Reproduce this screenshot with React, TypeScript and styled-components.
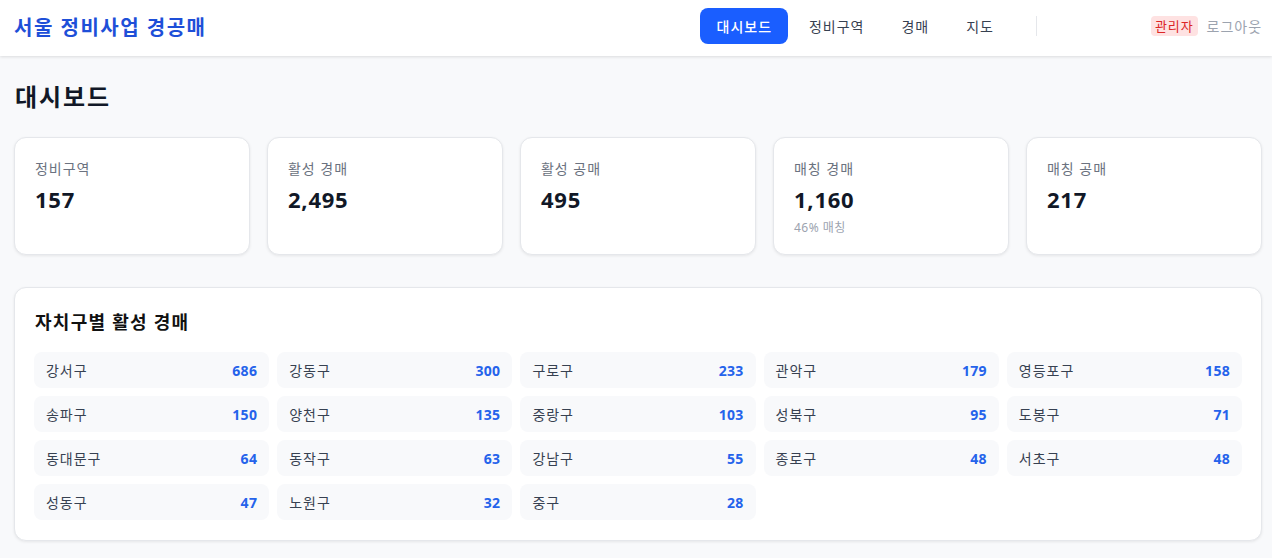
import React from "react";
import styled, { createGlobalStyle } from "styled-components";

const GlobalStyle = createGlobalStyle`
  * { box-sizing: border-box; }
  html, body { margin: 0; padding: 0; }
  body {
    background: #f8f9fb;
    font-family: "Noto Sans", "Noto Sans CJK KR", sans-serif;
    color: #111827;
  }
`;

const Header = styled.header`
  height: 56px;
  background: #ffffff;
  display: flex;
  align-items: center;
  padding: 0 10px 4px 14px;
  box-shadow: 0 1px 3px rgba(0, 0, 0, 0.12);
  position: relative;
  z-index: 1;
`;

const Logo = styled.div`
  font-size: 20px;
  font-weight: 700;
  color: #1e4fd8;
  letter-spacing: 0.075em;
`;

const Nav = styled.nav`
  margin-left: auto;
  display: flex;
  align-items: center;
  gap: 4px;
`;

const NavItem = styled.a<{ $active?: boolean }>`
  height: 36px;
  padding: 0 16px 0 17px;
  border-radius: 8px;
  display: flex;
  align-items: center;
  font-size: 14px;
  letter-spacing: 0.07em;
  color: ${(p) => (p.$active ? "#ffffff" : "#374151")};
  background: ${(p) => (p.$active ? "#1a5eff" : "transparent")};
  font-weight: ${(p) => (p.$active ? 500 : 400)};
  cursor: pointer;
`;

const Divider = styled.div`
  width: 1px;
  height: 20px;
  background: #e5e7eb;
  margin: 0 114px 0 26px;
`;

const UserArea = styled.div`
  display: flex;
  align-items: center;
  gap: 9px;
`;

const Badge = styled.span`
  font-size: 13px;
  letter-spacing: 0.07em;
  color: #dc2626;
  background: #fee2e2;
  border-radius: 4px;
  padding: 1px 4px;
  line-height: 18px;
`;

const Logout = styled.span`
  font-size: 14px;
  letter-spacing: 0.07em;
  color: #9ca3af;
`;

const Main = styled.main`
  padding: 25px 10px 18px 14px;
`;

const Title = styled.h1`
  margin: 0 0 24px 1px;
  font-size: 24px;
  line-height: 32px;
  font-weight: 700;
  letter-spacing: 0.08em;
  color: #111827;
`;

const StatsGrid = styled.div`
  display: grid;
  grid-template-columns: repeat(5, 1fr);
  gap: 17px;
  margin-bottom: 32px;
`;

const Card = styled.div`
  background: #ffffff;
  border: 1px solid #e5e7eb;
  border-radius: 12px;
  box-shadow: 0 1px 3px rgba(0, 0, 0, 0.08);
`;

const StatCard = styled(Card)`
  min-height: 118px;
  padding: 21px 20px 18px;
  display: flex;
  flex-direction: column;
`;

const StatLabel = styled.div`
  font-size: 14px;
  line-height: 20px;
  letter-spacing: 0.07em;
  color: #6b7280;
`;

const StatValue = styled.div`
  font-size: 22px;
  line-height: 30px;
  font-weight: 700;
  letter-spacing: 0.035em;
  color: #111827;
  margin-top: 5px;
`;

const StatSub = styled.div`
  font-size: 12px;
  line-height: 16px;
  letter-spacing: 0.04em;
  color: #9ca3af;
  margin-top: 6px;
`;

const Panel = styled(Card)`
  padding: 20px 19px 20px 19px;
`;

const PanelTitle = styled.h2`
  margin: 0 0 16px 1px;
  font-size: 18px;
  line-height: 28px;
  font-weight: 700;
  letter-spacing: 0.07em;
  color: #111111;
`;

const DistrictGrid = styled.div`
  display: grid;
  grid-template-columns: repeat(5, 1fr);
  gap: 8px;
`;

const DistrictCell = styled.div`
  height: 36px;
  background: #f8f9fb;
  border-radius: 8px;
  padding: 0 12px;
  display: flex;
  align-items: center;
  justify-content: space-between;
`;

const DistrictName = styled.span`
  font-size: 14px;
  letter-spacing: 0.07em;
  color: #374151;
`;

const DistrictCount = styled.span`
  font-size: 14px;
  font-weight: 700;
  letter-spacing: 0.02em;
  color: #2563eb;
`;

const stats = [
  { label: "정비구역", value: "157" },
  { label: "활성 경매", value: "2,495" },
  { label: "활성 공매", value: "495" },
  { label: "매칭 경매", value: "1,160", sub: "46% 매칭" },
  { label: "매칭 공매", value: "217" },
];

const districts: [string, number][] = [
  ["강서구", 686],
  ["강동구", 300],
  ["구로구", 233],
  ["관악구", 179],
  ["영등포구", 158],
  ["송파구", 150],
  ["양천구", 135],
  ["중랑구", 103],
  ["성북구", 95],
  ["도봉구", 71],
  ["동대문구", 64],
  ["동작구", 63],
  ["강남구", 55],
  ["종로구", 48],
  ["서초구", 48],
  ["성동구", 47],
  ["노원구", 32],
  ["중구", 28],
];

export default function App() {
  return (
    <>
      <GlobalStyle />
      <Header>
        <Logo>서울 정비사업 경공매</Logo>
        <Nav>
          <NavItem $active>대시보드</NavItem>
          <NavItem>정비구역</NavItem>
          <NavItem>경매</NavItem>
          <NavItem>지도</NavItem>
        </Nav>
        <Divider />
        <UserArea>
          <Badge>관리자</Badge>
          <Logout>로그아웃</Logout>
        </UserArea>
      </Header>
      <Main>
        <Title>대시보드</Title>
        <StatsGrid>
          {stats.map((s) => (
            <StatCard key={s.label}>
              <StatLabel>{s.label}</StatLabel>
              <StatValue>{s.value}</StatValue>
              {s.sub && <StatSub>{s.sub}</StatSub>}
            </StatCard>
          ))}
        </StatsGrid>
        <Panel>
          <PanelTitle>자치구별 활성 경매</PanelTitle>
          <DistrictGrid>
            {districts.map(([name, count]) => (
              <DistrictCell key={name}>
                <DistrictName>{name}</DistrictName>
                <DistrictCount>{count}</DistrictCount>
              </DistrictCell>
            ))}
          </DistrictGrid>
        </Panel>
      </Main>
    </>
  );
}
